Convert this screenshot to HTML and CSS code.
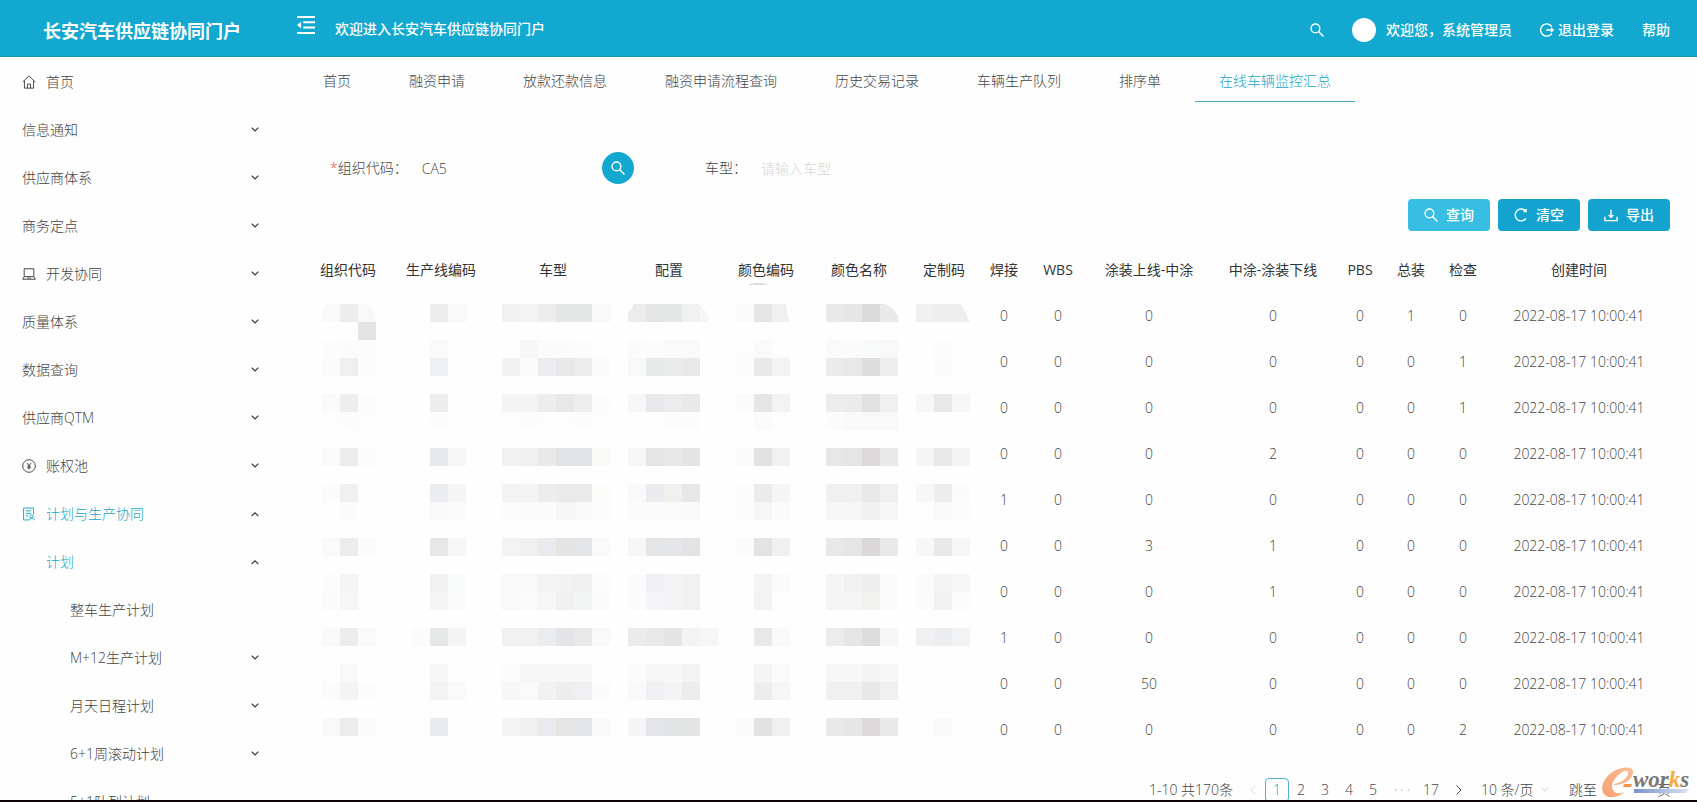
FILE: index.html
```html
<!DOCTYPE html>
<html lang="zh-CN">
<head>
    <meta charset="UTF-8">
    <meta name="viewport" content="width=device-width, initial-scale=1.0">
    <title>长安汽车供应链协同门户</title>
    <link rel="stylesheet" href="styles.css">
</head>
<body>
    <!-- Shared icons -->
    <svg class="sprite" aria-hidden="true">
        <symbol id="icon-search" viewBox="0 0 16 16">
            <circle cx="6.2" cy="6.2" r="5"/>
            <path d="M9.8 9.8l5.6 5.6"/>
        </symbol>
        <symbol id="icon-down" viewBox="0 0 8 8">
            <path d="M.6 1.6L4 5l3.4-3.4"/>
        </symbol>
        <symbol id="icon-up" viewBox="0 0 8 8">
            <path d="M.6 6.2L4 2.8l3.4 3.4"/>
        </symbol>
    </svg>

    <div class="app">
        <header class="header">
            <h1 class="brand">长安汽车供应链协同门户</h1>
            <div class="welcome">
                <button class="icon-button" aria-label="收起菜单">
                    <svg class="fold-icon" viewBox="0 0 20 20">
                        <path d="M0 1.2h20M7 7h13M7 12.8h13M0 18.8h20"/>
                        <path class="solid" d="M0 10l4.5-3.6v7.2z"/>
                    </svg>
                </button>
                <span>欢迎进入长安汽车供应链协同门户</span>
            </div>
            <div class="user">
                <button class="icon-button" aria-label="搜索">
                    <svg class="icon"><use href="#icon-search"/></svg>
                </button>
                <div class="user-name">
                    <span class="avatar"></span>
                    <span>欢迎您，系统管理员</span>
                </div>
                <a class="logout" href="#">
                    <svg class="icon" viewBox="0 0 16 16">
                        <path d="M13.6 4.2A7 7 0 1 0 13.6 11.8M7 8h8M12.6 5.8L15 8l-2.4 2.2"/>
                    </svg>
                    <span>退出登录</span>
                </a>
                <a href="#">帮助</a>
            </div>
        </header>

        <div class="body">
            <nav class="sidebar">
                <a class="menu-item" href="#">
                    <svg class="menu-icon" viewBox="0 0 16 16">
                        <path d="M.8 8L8 1l7.2 7M2.8 6.4V15h10.4V6.4M6.2 15v-4.6h3.6V15"/>
                    </svg>
                    <span>首页</span>
                </a>
                <button class="menu-item"><span>信息通知</span><svg class="arrow"><use href="#icon-down"/></svg></button>
                <button class="menu-item"><span>供应商体系</span><svg class="arrow"><use href="#icon-down"/></svg></button>
                <button class="menu-item"><span>商务定点</span><svg class="arrow"><use href="#icon-down"/></svg></button>
                <button class="menu-item">
                    <svg class="menu-icon" viewBox="0 0 16 16">
                        <path d="M2.5 2h11v9h-11zM2.5 11L.8 14h14.4l-1.7-3M6 12.6h4"/>
                    </svg>
                    <span>开发协同</span><svg class="arrow"><use href="#icon-down"/></svg>
                </button>
                <button class="menu-item"><span>质量体系</span><svg class="arrow"><use href="#icon-down"/></svg></button>
                <button class="menu-item"><span>数据查询</span><svg class="arrow"><use href="#icon-down"/></svg></button>
                <button class="menu-item"><span>供应商QTM</span><svg class="arrow"><use href="#icon-down"/></svg></button>
                <button class="menu-item">
                    <svg class="menu-icon" viewBox="0 0 16 16">
                        <circle cx="8" cy="8" r="7.2"/>
                        <path d="M5.6 4.4L8 7.8l2.4-3.4M8 7.8v4M6 8.2h4M6 10h4"/>
                    </svg>
                    <span>账权池</span><svg class="arrow"><use href="#icon-down"/></svg>
                </button>
                <button class="menu-item active">
                    <svg class="menu-icon" viewBox="0 0 16 16">
                        <path d="M8 14.8H1.8V1.2h11.4v7M4.4 4.4h6.2M4.4 7.2h6.2M4.4 10h2.4"/>
                        <circle cx="11" cy="10.8" r="1.8"/>
                        <path d="M8.6 15.2c0-3.4 5.4-3.4 5.4 0"/>
                    </svg>
                    <span>计划与生产协同</span><svg class="arrow"><use href="#icon-up"/></svg>
                </button>
                <button class="menu-item level-2 active"><span>计划</span><svg class="arrow"><use href="#icon-up"/></svg></button>
                <a class="menu-item level-3" href="#"><span>整车生产计划</span></a>
                <button class="menu-item level-3"><span>M+12生产计划</span><svg class="arrow"><use href="#icon-down"/></svg></button>
                <button class="menu-item level-3"><span>月天日程计划</span><svg class="arrow"><use href="#icon-down"/></svg></button>
                <button class="menu-item level-3"><span>6+1周滚动计划</span><svg class="arrow"><use href="#icon-down"/></svg></button>
                <a class="menu-item level-3" href="#"><span>5+1队列计划</span></a>
            </nav>

            <main class="main">
                <nav class="tabs">
                    <a class="tab" href="#">首页</a>
                    <a class="tab" href="#">融资申请</a>
                    <a class="tab" href="#">放款还款信息</a>
                    <a class="tab" href="#">融资申请流程查询</a>
                    <a class="tab" href="#">历史交易记录</a>
                    <a class="tab" href="#">车辆生产队列</a>
                    <a class="tab" href="#">排序单</a>
                    <a class="tab active" href="#">在线车辆监控汇总</a>
                </nav>

                <form class="filters">
                    <div class="field">
                        <label for="org"><span class="required">*</span>组织代码：</label>
                        <input type="text" id="org" value="CA5">
                        <button type="button" class="lookup" aria-label="选择组织">
                            <svg class="icon"><use href="#icon-search"/></svg>
                        </button>
                    </div>
                    <div class="field">
                        <label for="model">车型：</label>
                        <input type="text" id="model" placeholder="请输入车型">
                    </div>
                </form>

                <div class="actions">
                    <button class="btn btn-light">
                        <svg class="icon"><use href="#icon-search"/></svg>查询
                    </button>
                    <button class="btn">
                        <svg class="icon" viewBox="0 0 16 16"><path d="M13.6 12A6.8 6.8 0 1 1 13.4 3.6M13.8 1v3h-3"/></svg>清空
                    </button>
                    <button class="btn">
                        <svg class="icon" viewBox="0 0 16 16"><path d="M1 10v4.4h14V10M8 2v8.6M5.4 8L8 10.8 10.6 8"/></svg>导出
                    </button>
                </div>

                <div class="table-wrap">
                    <table class="table">
                        <colgroup>
                            <col class="w-org"><col class="w-line"><col class="w-model"><col class="w-config">
                            <col class="w-org"><col class="w-line"><col class="w-custom"><col class="w-small">
                            <col class="w-wbs"><col class="w-paint"><col class="w-paint-off"><col class="w-small">
                            <col class="w-final"><col class="w-check"><col class="w-time">
                        </colgroup>
                        <thead>
                            <tr>
                                <th>组织代码</th>
                                <th>生产线编码</th>
                                <th>车型</th>
                                <th>配置</th>
                                <th>颜色编码</th>
                                <th>颜色名称</th>
                                <th>定制码</th>
                                <th>焊接</th>
                                <th>WBS</th>
                                <th>涂装上线-中涂</th>
                                <th>中涂-涂装下线</th>
                                <th>PBS</th>
                                <th>总装</th>
                                <th>检查</th>
                                <th>创建时间</th>
                            </tr>
                        </thead>
                        <tbody id="rows"></tbody>
                    </table>
                    <!-- Masks the confidential columns -->
                    <svg class="mosaic" id="mosaic" viewBox="0 -24 666 456" aria-hidden="true"></svg>
                </div>

                <div class="pagination">
                    <span class="total">1-10 共170条</span>
                    <button class="page prev" aria-label="上一页"><svg class="page-arrow" viewBox="0 0 8 12"><path d="M6.5 1.5L2 6l4.5 4.5"/></svg></button>
                    <button class="page current">1</button>
                    <button class="page">2</button>
                    <button class="page">3</button>
                    <button class="page">4</button>
                    <button class="page">5</button>
                    <span class="dots">• • •</span>
                    <button class="page">17</button>
                    <button class="page next" aria-label="下一页"><svg class="page-arrow" viewBox="0 0 8 12"><path d="M1.5 1.5L6 6l-4.5 4.5"/></svg></button>
                    <div class="page-size">
                        <select aria-label="每页条数"><option>10 条/页</option></select>
                        <svg class="arrow"><use href="#icon-down"/></svg>
                    </div>
                    <label class="jump">跳至<input type="text">页</label>
                </div>
            </main>
        </div>

        <svg class="watermark" viewBox="0 0 88 34" role="img" aria-label="e-works">
            <defs>
                <linearGradient id="swoosh" x1="0" y1="1" x2="1" y2="0">
                    <stop offset="0" stop-color="#f9a070"/>
                    <stop offset="1" stop-color="#f7bd94"/>
                </linearGradient>
                <linearGradient id="line">
                    <stop offset="0" stop-color="#7b93cf"/>
                    <stop offset="1" stop-color="#dbe3f4"/>
                </linearGradient>
            </defs>
            <path fill="url(#swoosh)" d="M12 17C20 16 25 11 26 7c1-4-3-4-7-1C12 11 8 18 11 23c2 4 6 4 11 2C16 31 6 32 2 27-3 20 3 9 12 4c9-5 20-5 19 2-1 7-9 12-19 12z"/>
            <path fill="#f5934f" d="M22 17h8l-1 3h-8z"/>
            <path fill="url(#line)" d="M32 22h55l-3 4H32z"/>
            <text class="works" x="31" y="20">wor<tspan class="works-k">k</tspan>s</text>
        </svg>
    </div>

    <script src="script.js"></script>
</body>
</html>
```

FILE: styles.css
```css
* {
    box-sizing: border-box;
}

body {
    margin: 0;
    font-family: "Open Sans", "Noto Sans CJK SC", sans-serif;
    font-size: 14px;
    font-weight: 300;
    line-height: 20px;
    color: #444;
    background-color: #fefefe;
}

a {
    color: inherit;
    text-decoration: none;
}

button, input, select {
    font: inherit;
    color: inherit;
    border: none;
    background: none;
    padding: 0;
    margin: 0;
}

button {
    cursor: pointer;
}

svg {
    fill: none;
    stroke: currentColor;
    flex-shrink: 0;
}

.sprite {
    position: absolute;
    width: 0;
    height: 0;
}

.icon {
    width: 14px;
    height: 14px;
    stroke-width: 1.6;
}

.app {
    height: 100vh;
    display: flex;
    flex-direction: column;
    overflow: hidden;
    border-bottom: 2px solid #0c0508;
}

/* Header */
.header {
    display: flex;
    align-items: flex-start;
    flex-shrink: 0;
    height: 57px;
    padding: 16px 27px 0 0;
    color: #fff;
    background-color: #13a8d0;
    border-bottom: 1px solid #0f94ba;
    font-weight: 500;
}

.brand {
    width: 279px;
    margin: 0;
    padding-left: 43px;
    font-size: 18px;
    font-weight: 700;
    line-height: 30px;
}

.welcome {
    display: flex;
    align-items: flex-start;
    gap: 19px;
    padding-left: 17px;
    line-height: 26px;
}

.icon-button {
    display: flex;
}

.fold-icon {
    width: 20px;
    height: 18px;
    stroke-width: 2.2;
}

.solid {
    fill: currentColor;
    stroke: none;
}

.user {
    display: flex;
    align-items: center;
    gap: 28px;
    height: 28px;
    margin-left: auto;
}

.user-name {
    display: flex;
    align-items: center;
    gap: 10px;
}

.avatar {
    width: 24px;
    height: 24px;
    border-radius: 50%;
    background-color: #fff;
}

.logout {
    display: flex;
    align-items: center;
    gap: 4px;
}

.body {
    display: flex;
    flex: 1;
    min-height: 0;
}

/* Sidebar */
.sidebar {
    flex: 0 0 279px;
    overflow: hidden;
}

.menu-item {
    display: flex;
    align-items: center;
    gap: 10px;
    width: 100%;
    height: 48px;
    padding: 2px 20px 0 22px;
    text-align: left;
}

.menu-item.active {
    color: #1ba5c6;
}

.level-2 {
    padding-left: 46px;
}

.level-3 {
    padding-left: 70px;
}

.menu-icon {
    width: 14px;
    height: 14px;
    stroke-width: 1.1;
}

.arrow {
    width: 8px;
    height: 8px;
    margin-left: auto;
    color: #333;
    stroke-width: 1.1;
}

/* Tabs */
.main {
    flex: 1;
    min-width: 0;
    padding: 0 26px 0 24px;
}

.tabs {
    display: flex;
    gap: 10px;
    margin-left: -4px;
}

.tab {
    padding: 14px 24px 10px;
    white-space: nowrap;
    border-bottom: 1px solid transparent;
}

.tab.active {
    color: #1ba5c6;
    border-bottom-color: #4ca9c0;
}

/* Filters */
.filters {
    display: flex;
    gap: 71px;
    padding: 50px 0 0 27px;
}

.field {
    display: flex;
    align-items: center;
    width: 304px;
    height: 32px;
}

.field input {
    flex: 1;
    min-width: 0;
    height: 32px;
    padding: 0 14px;
}

.field input::placeholder {
    color: #d6d6d6;
    opacity: 1;
}

.required {
    color: #f04a2a;
}

.lookup {
    display: flex;
    align-items: center;
    justify-content: center;
    width: 32px;
    height: 32px;
    border-radius: 50%;
    color: #fff;
    background-color: #13a8d0;
}

.actions {
    display: flex;
    justify-content: flex-end;
    gap: 8px;
    margin: 15px 1px 0 0;
}

.btn {
    display: flex;
    align-items: center;
    justify-content: center;
    gap: 8px;
    width: 82px;
    height: 32px;
    border-radius: 4px;
    color: #fff;
    background-color: #13a3ce;
    font-weight: 500;
}

.btn-light {
    background-color: #38bee2;
}

/* Table */
.table-wrap {
    position: relative;
    margin-top: 16px;
}

.table {
    width: 100%;
    table-layout: fixed;
    border-collapse: collapse;
}

.table th, .table td {
    height: 46px;
    padding: 0;
    text-align: center;
    white-space: nowrap;
}

.table th {
    font-weight: 400;
    color: #333;
}

.w-org { width: 90px; }
.w-line { width: 96px; }
.w-model { width: 128px; }
.w-config { width: 104px; }
.w-custom { width: 74px; }
.w-small { width: 46px; }
.w-wbs { width: 62px; }
.w-paint { width: 120px; }
.w-paint-off { width: 128px; }
.w-final { width: 56px; }
.w-check { width: 48px; }
.w-time { width: 184px; }

.mosaic {
    position: absolute;
    top: 33px;
    left: 19px;
    width: 666px;
    height: 456px;
    stroke: none;
    shape-rendering: crispEdges;
}

/* Pagination */
.pagination {
    display: flex;
    align-items: center;
    justify-content: flex-end;
    margin-top: 25px;
}

.total {
    margin-right: 8px;
}

.page {
    display: flex;
    align-items: center;
    justify-content: center;
    min-width: 24px;
    height: 24px;
    border-radius: 4px;
}

.page.current {
    color: #1ba5c6;
    border: 1px solid #4fb4c8;
}

.page-arrow {
    width: 8px;
    height: 12px;
}

.prev {
    color: #ddd;
}

.dots {
    width: 34px;
    text-align: center;
    font-size: 10px;
    color: #ccc;
}

.page-size {
    display: flex;
    align-items: center;
    width: 68px;
    margin-left: 6px;
}

.page-size select {
    appearance: none;
}

.page-size .arrow {
    color: #ddd;
}

.next {
    min-width: 32px;
}

.jump {
    display: flex;
    margin-left: 20px;
}

.jump input {
    width: 60px;
}

.watermark {
    position: absolute;
    right: 7px;
    bottom: 1px;
    width: 88px;
    height: 34px;
    stroke: none;
}

.works {
    font-family: "Liberation Serif", serif;
    font-size: 23px;
    font-style: italic;
    font-weight: 700;
    fill: #77787a;
}

.works-k {
    fill: #f8ab3c;
}
```

FILE: script.js
```javascript
// Station counts: 焊接, WBS, 涂装上线-中涂, 中涂-涂装下线, PBS, 总装, 检查
const stations = [
    [0, 0, 0, 0, 0, 1, 0],
    [0, 0, 0, 0, 0, 0, 1],
    [0, 0, 0, 0, 0, 0, 1],
    [0, 0, 0, 2, 0, 0, 0],
    [1, 0, 0, 0, 0, 0, 0],
    [0, 0, 3, 1, 0, 0, 0],
    [0, 0, 0, 1, 0, 0, 0],
    [1, 0, 0, 0, 0, 0, 0],
    [0, 0, 50, 0, 0, 0, 0],
    [0, 0, 0, 0, 0, 0, 2]
];

document.getElementById('rows').innerHTML = stations.map(counts => `
    <tr>
        ${'<td></td>'.repeat(7)}
        ${counts.map(count => `<td>${count}</td>`).join('')}
        <td>2022-08-17 10:00:41</td>
    </tr>
`).join('');

// Mosaic rows: row number -> { first column: colours }, two digits mean a grey
const size = 18;
const mosaic = {
    0: { 0: 'f9 ec f8', 6: 'ec f8', 10: 'f1 f3 ed e4e7e6 e4e7e6 f8', 17: 'ec e5 e4e7e7 f1 f6', 23: 'fb e3e6e5 ef', 28: 'e9 e6 da e9', 33: 'f0 ee ee' },
    1: { 2: 'e4' },
    2: { 0: 'fc fb fc', 6: 'fa', 10: 'fd f7 fb fb fc fd', 17: 'fb fc fa fa', 23: 'fd fa fd', 28: 'fafaf8 fb f9fbfa f8', 34: 'fc' },
    3: { 0: 'f9fcfb ef fc', 6: 'edeff1', 10: 'f2 fa ebecef e8 ec fb', 17: 'f8 e7eaea eaeceb e9', 23: 'fc e9 f3', 27: 'fd eb e8 dd ee', 34: 'fb' },
    5: { 0: 'fa ee fc', 6: 'ed', 10: 'f4 f4 ebeeed e8 ee fc', 17: 'f7 e7e8eb ec e9', 23: 'fb e5 f3', 27: 'fd ec eb e1 ef', 33: 'f7 e8 f7' },
    6: { 0: 'fd fc fd', 6: 'fc', 10: 'fd fc fd fd fc fd', 17: 'fd fd fc fc', 24: 'fb fd', 27: 'fd fb f9 f8 f9', 33: 'fd fd fd' },
    8: { 0: 'fa ec fc', 6: 'e7e8ea f7', 10: 'f1 f0 e9 e2e3e6 e2e3e6 f9f9f8', 17: 'f6 e5 e7e7e5 e4', 23: 'fb e2 f1', 28: 'e7 e5 dddadb e9', 33: 'f5 e8 f4' },
    10: { 0: 'fb f0 fd', 5: 'fd ebedf0 f5', 10: 'f3 f4 ed ea ea fcfcfa', 17: 'f9 e9ebee f0f0ee e7', 23: 'fc eb f5', 28: 'f0f0ee f0 e9 ef', 33: 'f7 ed fb' },
    11: { 0: 'fd fb fd', 5: 'fd f8 fb', 10: 'fc fb fb f7 f8 fc', 17: 'fb fb fa f9', 23: 'fc f6 fb', 28: 'f7 f6 f0 f6', 33: 'fd f8 fc' },
    13: { 0: 'fa ec fb', 6: 'e7 f7', 10: 'f3 ef e9eaed e4e4e2 e4e5e8 fa', 17: 'f6 e3e6e5 e4e6e9 e3', 23: 'fb e1e4e3 f0', 27: 'fd e8 e5 dad8d9 e9', 33: 'f7 e9 f6' },
    15: { 0: 'fc f5 fd', 6: 'f1 fafcfb', 10: 'f8 f8 f3 f2 f0 fc', 17: 'fb eef0f4 f3 f1', 24: 'f4 fb', 28: 'f5 f1 ee fb', 33: 'fb f3f5f4 f7' },
    16: { 0: 'fafcfb f6 fd', 6: 'f5 fb', 10: 'f8 fb f6 f0 f2f4f3 fb', 17: 'fb f3f5f8 f3 f1', 24: 'f3 fd', 28: 'f5 f5 f1f1ef fb', 33: 'fb f2 fc' },
    18: { 0: 'f9 ec fa', 5: 'fb e5e8e7 f4', 10: 'f1 f1 ebecef e3e4e7 e8 f8', 17: 'eb e8 e4e4e7 f3 f6', 24: 'e8 f8faf9', 28: 'eaecee e5 dd f7', 33: 'f0 ebedf0 f2f4f3' },
    20: { 0: 'fd f8', 6: 'f7 fd', 10: 'fc f7 f7 f7 f7 fd', 17: 'fb f6 f7 f3', 23: 'fd f5 fa', 28: 'f7 f7 f4 f7', 34: 'fd' },
    21: { 0: 'fb f4 fc', 6: 'f3 fa', 10: 'f7 fa f1f1f4 ed efeff2 fb', 17: 'f9 eef0f3 f5f3f4 ec', 23: 'fd ed f6', 28: 'f0f0ee f0 e7 f0', 34: 'fd' },
    23: { 0: 'f8 ec fb', 6: 'e9ebed fd', 10: 'f4 ef e9eaed e5e5e3 e4e5e8 f9', 17: 'f5 e4e5e8 e1e5e6 e4', 23: 'fb e2 ef', 27: 'fd e9 e6 dcdadb e9', 34: 'f9' }
};

// Brush edges cut into the first mosaic row
const cuts = [
    'M0 0h5L0 6z',
    'M54 0v18Q52 4 44 0z',
    'M306 0h6Q308 8 306 10z',
    'M396 0v18h-8Q384 4 376 0z',
    'M468 0v18h-1L464 0z',
    'M576 0v12Q570 3 563 0z',
    'M648 0v18h-1Q644 6 639 0z'
];

let shapes = '';
for (const [row, groups] of Object.entries(mosaic)) {
    for (const [start, colors] of Object.entries(groups)) {
        colors.split(' ').forEach((color, i) => {
            const fill = color.length === 2 ? color.repeat(3) : color;
            shapes += `<rect x="${(Number(start) + i) * size}" y="${row * size}" width="${size}" height="${size}" fill="#${fill}"/>`;
        });
    }
}
shapes += cuts.map(d => `<path d="${d}" fill="#fefefe"/>`).join('');
shapes += '<path d="M425 -19q11 -4 22 0z" fill="#ddd"/>';
document.getElementById('mosaic').innerHTML = shapes;
```
